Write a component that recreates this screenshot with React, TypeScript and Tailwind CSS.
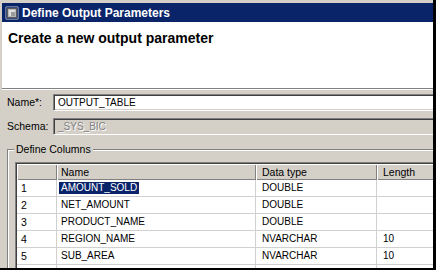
import React from 'react';

const rows = [
    { n: '1', name: 'AMOUNT_SOLD', type: 'DOUBLE', len: '', selected: true },
    { n: '2', name: 'NET_AMOUNT', type: 'DOUBLE', len: '' },
    { n: '3', name: 'PRODUCT_NAME', type: 'DOUBLE', len: '' },
    { n: '4', name: 'REGION_NAME', type: 'NVARCHAR', len: '10' },
    { n: '5', name: 'SUB_AREA', type: 'NVARCHAR', len: '10' },
    { n: '', name: '', type: '', len: '' },
];

const sunken = 'border border-t-[#808080] border-l-[#808080] border-b-white border-r-white shadow-[inset_1px_1px_0_#404040,inset_-1px_-1px_0_#d4d0c8]';
const headCell = 'h-[16px] flex items-center bg-[#d4d0c8] shadow-[inset_1px_1px_0_#fff,inset_-1px_-1px_0_#808080]';

const ChipIcon: React.FC = () => (
    <svg width="14" height="14" viewBox="0 0 14 14" className="shrink-0">
        {[1, 3, 5, 7, 9, 11].map((p) => (
            <g key={p} fill="#c8c8c8">
                <rect x={p + 0.5} y="0" width="1" height="1.5" />
                <rect x={p + 0.5} y="12.5" width="1" height="1.5" />
                <rect x="0" y={p + 0.5} width="1.5" height="1" />
                <rect x="12.5" y={p + 0.5} width="1.5" height="1" />
            </g>
        ))}
        <rect x="2" y="2" width="10" height="10" fill="#5a5a5a" />
        <rect x="3" y="3" width="8" height="8" fill="#b8b8b8" />
        <rect x="4" y="4" width="6" height="6" fill="#e0e0e0" />
        <rect x="6" y="6" width="4" height="4" fill="#9a9a9a" />
    </svg>
);

const App: React.FC = () => {
    return (
        <div className="w-[436px] h-[270px] overflow-hidden bg-[#d4d0c8] flex flex-col pt-[3px] pl-[2px] border-r-[3px] border-b-[2px] border-black font-['Liberation_Sans',Arial,sans-serif] text-black">
            {/* title bar */}
            <div className="h-[19px] shrink-0 bg-[#0a246a] flex items-center pl-[3px] gap-[3px]">
                <ChipIcon />
                <span className="text-white font-bold text-[12px] leading-none whitespace-nowrap">Define Output Parameters</span>
            </div>

            {/* banner */}
            <div className="h-[66px] shrink-0 bg-white pl-[6px] pt-[8px]">
                <p className="font-bold text-[14px] leading-[17px] whitespace-nowrap">Create a new output parameter</p>
            </div>
            <div className="h-px shrink-0 bg-[#808080]" />
            <div className="h-px shrink-0 bg-white" />

            {/* form */}
            <div className="mt-[4px] flex items-center h-[17px] shrink-0">
                <span className="w-[51px] shrink-0 pl-[5px] text-[10.5px] leading-none">Name*:</span>
                <div className={`${sunken} w-[420px] h-[17px] shrink-0 bg-white flex items-center pl-[4px] text-[10px] leading-none`}>OUTPUT_TABLE</div>
            </div>
            <div className="mt-[7px] flex items-center h-[17px] shrink-0">
                <span className="w-[51px] shrink-0 pl-[5px] text-[10.5px] leading-none">Schema:</span>
                <div className={`${sunken} w-[420px] h-[17px] shrink-0 bg-[#d4d0c8] flex items-center pl-[4px] text-[10px] leading-none text-[#808080] [text-shadow:1px_1px_0_#fff]`}>_SYS_BIC</div>
            </div>

            {/* group box */}
            <div className="relative mt-[14px] ml-[5px] w-[440px] h-[200px] shrink-0 border-t border-l border-[#808080] shadow-[inset_1px_1px_0_#fff]">
                <span className="absolute -top-[7px] left-[6px] px-[2px] bg-[#d4d0c8] text-[10.5px] leading-[13px] whitespace-nowrap">Define Columns</span>

                <div className="mt-[12px] ml-[7px] w-[440px] border-t border-l border-[#808080] shadow-[inset_1px_1px_0_#404040] pt-px pl-px bg-white">
                    <div className="grid grid-cols-[40px_199px_121px_120px] text-[10.5px] leading-none">
                        <div className={headCell} />
                        <div className={`${headCell} pl-[4px]`}>Name</div>
                        <div className={`${headCell} pl-[6px]`}>Data type</div>
                        <div className={`${headCell} pl-[6px]`}>Length</div>
                    </div>
                    {rows.map((r, i) => (
                        <div key={i} className="grid grid-cols-[40px_199px_121px_120px] text-[10px] leading-none">
                            <div className="h-[17px] flex items-center pl-[4px] border-r border-b border-[#d0d0d0] text-[10.5px]">{r.n}</div>
                            <div className="h-[17px] flex items-center pl-[2px] border-r border-b border-[#d0d0d0]">
                                <span className={`px-[2px] h-[12px] flex items-center ${r.selected ? 'bg-[#0a246a] text-white' : ''}`}>{r.name}</span>
                            </div>
                            <div className="h-[17px] flex items-center pl-[6px] border-r border-b border-[#d0d0d0]">{r.type}</div>
                            <div className="h-[17px] flex items-center pl-[6px] border-b border-[#d0d0d0]">{r.len}</div>
                        </div>
                    ))}
                </div>
            </div>
        </div>
    );
};

export default App;
